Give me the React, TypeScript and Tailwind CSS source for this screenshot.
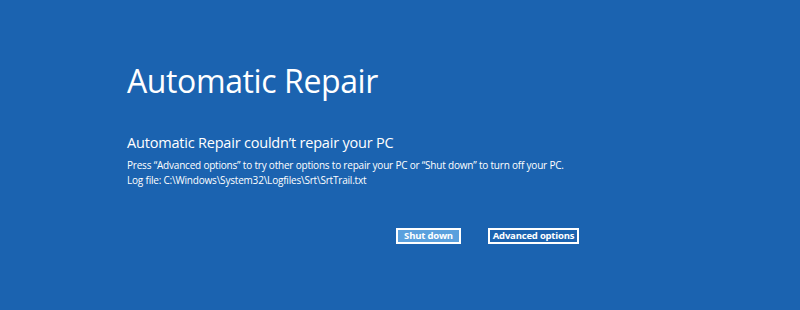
export default function App() {
  return (
    <div className="w-[800px] h-[310px] bg-[#1b63b0] text-white overflow-hidden" style={{ fontFamily: '"Open Sans", "Noto Sans", sans-serif' }}>
      <div className="pl-[127px] pt-[62px]">
        <h1 className="text-[32px] leading-[38px] tracking-[-0.4px] font-normal">Automatic Repair</h1>
        <h2 className="mt-[34px] text-[14.5px] leading-[18px] tracking-[-0.2px]">Automatic Repair couldn’t repair your PC</h2>
        <div className="mt-[6px] text-[10px] leading-[15px] tracking-[-0.2px]">
          <p>Press “Advanced options” to try other options to repair your PC or “Shut down” to turn off your PC.</p>
          <p>Log file: C:\Windows\System32\Logfiles\Srt\SrtTrail.txt</p>
        </div>
        <div className="mt-[40px] ml-[269px] flex gap-[27px] text-[9.5px] font-bold tracking-[-0.2px]">
          <button className="h-[16px] w-[65px] border-2 border-white bg-[#5aa0dd] leading-[12px]">Shut down</button>
          <button className="h-[16px] w-[91px] border-2 border-white bg-[#1b63b0] leading-[12px]">Advanced options</button>
        </div>
      </div>
    </div>
  );
}
